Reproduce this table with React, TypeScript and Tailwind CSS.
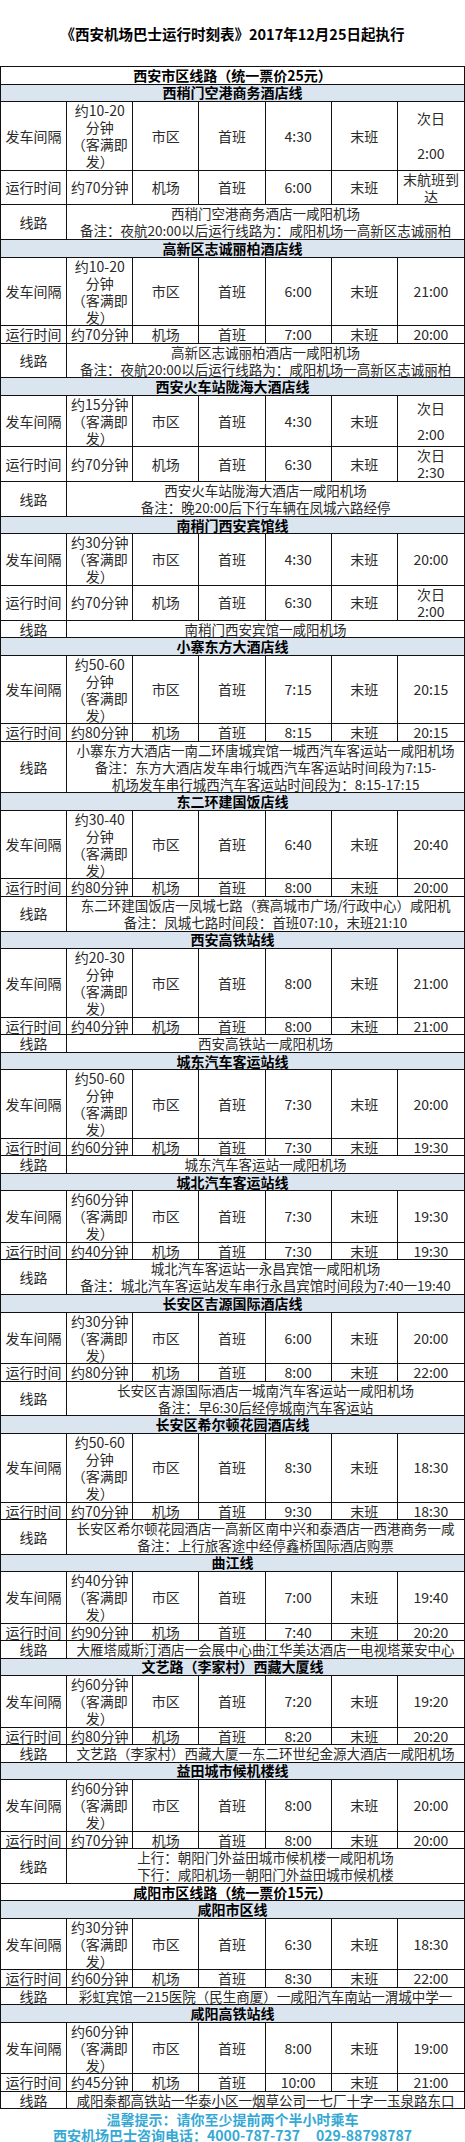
import { clsx } from 'clsx'

type Lines = 1 | 2 | 3 | 4

interface Route {
  name: string
  depart: { rows: Lines; interval: string[]; first: string; last: string[]; lastGap?: string }
  run: { rows: Lines; duration: string; first: string; last: string[] }
  path: { rows: Lines; text: string[] }
}

const ROW_H: Record<Lines, string> = {
  1: 'h-[17.5px]',
  2: 'h-[34.7px]',
  3: 'h-[51.5px]',
  4: 'h-[68.7px]',
}

const WAIT = ['（客满即', '发）']

const xianRoutes: Route[] = [
  {
    name: '西稍门空港商务酒店线',
    depart: { rows: 4, interval: ['约10-20', '分钟', ...WAIT], first: '4:30', last: ['次日', '2:00'], lastGap: 'mt-[18px]' },
    run: { rows: 2, duration: '约70分钟', first: '6:00', last: ['末航班到', '达'] },
    path: {
      rows: 2,
      text: ['西稍门空港商务酒店一咸阳机场', '备注：夜航20:00以后运行线路为：咸阳机场一高新区志诚丽柏'],
    },
  },
  {
    name: '高新区志诚丽柏酒店线',
    depart: { rows: 4, interval: ['约10-20', '分钟', ...WAIT], first: '6:00', last: ['21:00'] },
    run: { rows: 1, duration: '约70分钟', first: '7:00', last: ['20:00'] },
    path: {
      rows: 2,
      text: ['高新区志诚丽柏酒店一咸阳机场', '备注：夜航20:00以后运行线路为：咸阳机场一高新区志诚丽柏'],
    },
  },
  {
    name: '西安火车站陇海大酒店线',
    depart: { rows: 3, interval: ['约15分钟', ...WAIT], first: '4:30', last: ['次日', '2:00'], lastGap: 'mt-[9px]' },
    run: { rows: 2, duration: '约70分钟', first: '6:30', last: ['次日', '2:30'] },
    path: { rows: 2, text: ['西安火车站陇海大酒店一咸阳机场', '备注：晚20:00后下行车辆在凤城六路经停'] },
  },
  {
    name: '南稍门西安宾馆线',
    depart: { rows: 3, interval: ['约30分钟', ...WAIT], first: '4:30', last: ['20:00'] },
    run: { rows: 2, duration: '约70分钟', first: '6:30', last: ['次日', '2:00'] },
    path: { rows: 1, text: ['南稍门西安宾馆一咸阳机场'] },
  },
  {
    name: '小寨东方大酒店线',
    depart: { rows: 4, interval: ['约50-60', '分钟', ...WAIT], first: '7:15', last: ['20:15'] },
    run: { rows: 1, duration: '约80分钟', first: '8:15', last: ['20:15'] },
    path: {
      rows: 3,
      text: [
        '小寨东方大酒店一南二环唐城宾馆一城西汽车客运站一咸阳机场',
        '备注：东方大酒店发车串行城西汽车客运站时间段为7:15-',
        '机场发车串行城西汽车客运站时间段为：8:15-17:15',
      ],
    },
  },
  {
    name: '东二环建国饭店线',
    depart: { rows: 4, interval: ['约30-40', '分钟', ...WAIT], first: '6:40', last: ['20:40'] },
    run: { rows: 1, duration: '约80分钟', first: '8:00', last: ['20:00'] },
    path: {
      rows: 2,
      text: ['东二环建国饭店一凤城七路（赛高城市广场/行政中心）咸阳机', '备注：凤城七路时间段：首班07:10，末班21:10'],
    },
  },
  {
    name: '西安高铁站线',
    depart: { rows: 4, interval: ['约20-30', '分钟', ...WAIT], first: '8:00', last: ['21:00'] },
    run: { rows: 1, duration: '约40分钟', first: '8:00', last: ['21:00'] },
    path: { rows: 1, text: ['西安高铁站一咸阳机场'] },
  },
  {
    name: '城东汽车客运站线',
    depart: { rows: 4, interval: ['约50-60', '分钟', ...WAIT], first: '7:30', last: ['20:00'] },
    run: { rows: 1, duration: '约60分钟', first: '7:30', last: ['19:30'] },
    path: { rows: 1, text: ['城东汽车客运站一咸阳机场'] },
  },
  {
    name: '城北汽车客运站线',
    depart: { rows: 3, interval: ['约60分钟', ...WAIT], first: '7:30', last: ['19:30'] },
    run: { rows: 1, duration: '约40分钟', first: '7:30', last: ['19:30'] },
    path: {
      rows: 2,
      text: ['城北汽车客运站一永昌宾馆一咸阳机场', '备注：城北汽车客运站发车串行永昌宾馆时间段为7:40一19:40'],
    },
  },
  {
    name: '长安区吉源国际酒店线',
    depart: { rows: 3, interval: ['约30分钟', ...WAIT], first: '6:00', last: ['20:00'] },
    run: { rows: 1, duration: '约80分钟', first: '8:00', last: ['22:00'] },
    path: {
      rows: 2,
      text: ['长安区吉源国际酒店一城南汽车客运站一咸阳机场', '备注：早6:30后经停城南汽车客运站'],
    },
  },
  {
    name: '长安区希尔顿花园酒店线',
    depart: { rows: 4, interval: ['约50-60', '分钟', ...WAIT], first: '8:30', last: ['18:30'] },
    run: { rows: 1, duration: '约70分钟', first: '9:30', last: ['18:30'] },
    path: {
      rows: 2,
      text: ['长安区希尔顿花园酒店一高新区南中兴和泰酒店一西港商务一咸', '备注：上行旅客途中经停鑫桥国际酒店购票'],
    },
  },
  {
    name: '曲江线',
    depart: { rows: 3, interval: ['约40分钟', ...WAIT], first: '7:00', last: ['19:40'] },
    run: { rows: 1, duration: '约90分钟', first: '7:40', last: ['20:20'] },
    path: { rows: 1, text: ['大雁塔威斯汀酒店一会展中心曲江华美达酒店一电视塔莱安中心'] },
  },
  {
    name: '文艺路（李家村）西藏大厦线',
    depart: { rows: 3, interval: ['约60分钟', ...WAIT], first: '7:20', last: ['19:20'] },
    run: { rows: 1, duration: '约80分钟', first: '8:20', last: ['20:20'] },
    path: { rows: 1, text: ['文艺路（李家村）西藏大厦一东二环世纪金源大酒店一咸阳机场'] },
  },
  {
    name: '益田城市候机楼线',
    depart: { rows: 3, interval: ['约60分钟', ...WAIT], first: '8:00', last: ['20:00'] },
    run: { rows: 1, duration: '约70分钟', first: '8:00', last: ['20:00'] },
    path: {
      rows: 2,
      text: ['上行：朝阳门外益田城市候机楼一咸阳机场', '下行：咸阳机场一朝阳门外益田城市候机楼'],
    },
  },
]

const xianyangRoutes: Route[] = [
  {
    name: '咸阳市区线',
    depart: { rows: 3, interval: ['约30分钟', ...WAIT], first: '6:30', last: ['18:30'] },
    run: { rows: 1, duration: '约60分钟', first: '8:30', last: ['22:00'] },
    path: { rows: 1, text: ['彩虹宾馆一215医院（民生商厦）一咸阳汽车南站一渭城中学一'] },
  },
  {
    name: '咸阳高铁站线',
    depart: { rows: 3, interval: ['约60分钟', ...WAIT], first: '8:00', last: ['19:00'] },
    run: { rows: 1, duration: '约45分钟', first: '10:00', last: ['21:00'] },
    path: { rows: 1, text: ['咸阳秦都高铁站一华泰小区一烟草公司一七厂十字一玉泉路东口'] },
  },
]

function Cell({ children, className }: { children: React.ReactNode; className?: string }) {
  return (
    <div className={clsx('flex flex-col items-center justify-center border-r border-[#111] text-center', className)}>
      {children}
    </div>
  )
}

function TimeRow({
  rows,
  label,
  span,
  place,
  first,
  last,
  lastGap,
}: {
  rows: Lines
  label: string
  span: string[]
  place: string
  first: string
  last: string[]
  lastGap?: string
}) {
  return (
    <div className={clsx('grid grid-cols-7 border-b border-[#111]', ROW_H[rows])}>
      <Cell>{label}</Cell>
      <Cell>
        {span.map((line) => (
          <div key={line}>{line}</div>
        ))}
      </Cell>
      <Cell>{place}</Cell>
      <Cell>首班</Cell>
      <Cell>{first}</Cell>
      <Cell>末班</Cell>
      <Cell className="border-r-0">
        {last.map((line, idx) => (
          <div key={line} className={idx > 0 ? lastGap : undefined}>
            {line}
          </div>
        ))}
      </Cell>
    </div>
  )
}

function TitleRow({ text, blue }: { text: string; blue?: boolean }) {
  return (
    <div
      className={clsx(
        'flex h-[17.5px] items-center justify-center border-b border-[#111] font-bold text-black',
        blue ? 'bg-[#dbe5f0]' : 'bg-white',
      )}>
      {text}
    </div>
  )
}

function RouteBlock({ route }: { route: Route }) {
  const { depart, run, path } = route
  return (
    <>
      <TitleRow text={route.name} blue />
      <TimeRow
        rows={depart.rows}
        label="发车间隔"
        span={depart.interval}
        place="市区"
        first={depart.first}
        last={depart.last}
        lastGap={depart.lastGap}
      />
      <TimeRow rows={run.rows} label="运行时间" span={[run.duration]} place="机场" first={run.first} last={run.last} />
      <div className={clsx('grid grid-cols-7 border-b border-[#111]', ROW_H[path.rows])}>
        <Cell>线路</Cell>
        <Cell className="col-span-6 items-stretch whitespace-nowrap border-r-0 text-[13.5px]">
          {path.text.map((line) => (
            <div key={line} className="text-center">
              {line}
            </div>
          ))}
        </Cell>
      </div>
    </>
  )
}

export default function App() {
  return (
    <div className="w-[465px] bg-white font-['Noto_Sans_CJK_SC',sans-serif] text-[14px] leading-[17px] text-[#2a2a2a]">
      <div className="flex h-[66px] items-center justify-center text-[14.5px] font-bold text-black">
        《西安机场巴士运行时刻表》2017年12月25日起执行
      </div>

      <div className="border-x border-t border-[#111]">
        <TitleRow text="西安市区线路（统一票价25元）" />
        {xianRoutes.map((route) => (
          <RouteBlock key={route.name} route={route} />
        ))}
        <TitleRow text="咸阳市区线路（统一票价15元）" />
        {xianyangRoutes.map((route) => (
          <RouteBlock key={route.name} route={route} />
        ))}
      </div>

      <div className="pt-[2px] text-center text-[14px] font-bold leading-[16px] text-[#35a9d4]">
        <div>温馨提示：请你至少提前两个半小时乘车</div>
        <div className="whitespace-pre">西安机场巴士咨询电话：4000-787-737     029-88798787</div>
      </div>
    </div>
  )
}
